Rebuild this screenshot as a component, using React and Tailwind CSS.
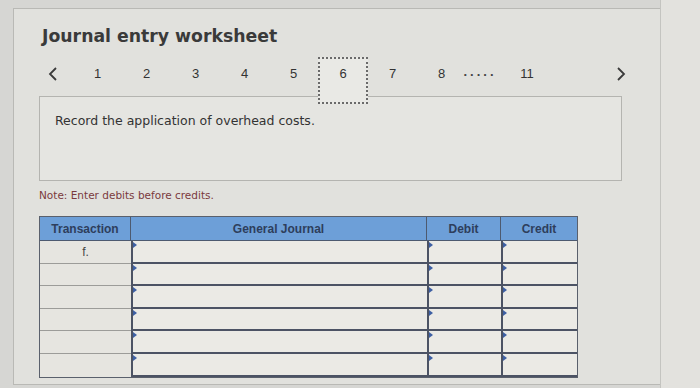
import React from 'react';

const pages = ['1', '2', '3', '4', '5', '6', '7', '8'];
const rows = ['f.', '', '', '', '', ''];

const Chevron = ({ dir }) => (
    <svg width="12" height="16" viewBox="0 0 12 16" fill="none">
        {dir === 'left' ? (
            <polyline points="9,2 3,8 9,14" stroke="#3a3a3a" strokeWidth="1.8" />
        ) : (
            <polyline points="3,2 9,8 3,14" stroke="#3a3a3a" strokeWidth="1.8" />
        )}
    </svg>
);

const InputCell = () => (
    <div className="relative h-full border-l-2 border-b-2 border-[#4c5364] bg-[#ebeae5]">
        <span className="absolute left-0 top-[1px] w-0 h-0 border-y-[3px] border-y-transparent border-l-[4px] border-l-[#3d5fa3]" />
    </div>
);

const App = () => {
    return (
        <div className="w-[700px] h-[388px] overflow-hidden bg-[#d6d6d3] flex" style={{ fontFamily: '"DejaVu Sans", Verdana, sans-serif' }}>
            <div className="ml-[13px] mt-[8px] w-[647px] h-[377px] border-l border-t border-b border-[#b9b9b5] bg-[#e1e1dd] pl-[25px] pt-[17px]">
                <h1 className="text-[17.3px] leading-[20px] font-bold text-[#3a3a3a] pl-[3px]">Journal entry worksheet</h1>

                {/* pagination */}
                <div className="mt-[11px] h-[47px] flex items-start text-[13px] text-[#333]" style={{ fontFamily: '"Liberation Sans", Arial, sans-serif' }}>
                    <div className="w-[28px] h-[33px] flex items-center justify-center"><Chevron dir="left" /></div>
                    <div className="ml-[6px] flex items-start">
                        {pages.map((p) =>
                            p === '6' ? (
                                <div key={p} className="relative z-10 w-[50px] h-[47px] bg-[#e9e9e5] border-2 border-dotted border-[#6a6a6a]">
                                    <div className="h-[29px] flex items-center justify-center">{p}</div>
                                </div>
                            ) : (
                                <div key={p} className="w-[49px] h-[33px] flex items-center justify-center">{p}</div>
                            )
                        )}
                    </div>
                    <div className="-ml-[6px] w-[40px] h-[33px] flex items-center justify-center font-bold tracking-[3px] text-[#444]">
                        <span className="-mt-[4px]">.....</span>
                    </div>
                    <div className="w-[54px] h-[33px] flex items-center justify-center">11</div>
                    <div className="ml-[56px] w-[22px] h-[33px] flex items-center justify-center"><Chevron dir="right" /></div>
                </div>

                {/* prompt */}
                <div className="-mt-[8px] w-[583px] h-[85px] border border-[#b4b4b0] bg-[#e5e5e1] pl-[15px] pt-[16px]">
                    <p className="text-[12.5px] leading-[16px] text-[#333]">Record the application of overhead costs.</p>
                </div>

                <p className="mt-[7px] text-[10.5px] leading-[14px] text-[#7b3a3e]">Note: Enter debits before credits.</p>

                {/* table */}
                <div className="mt-[14px] w-[539px] border border-[#5a606c] bg-[#e6e5e0]" style={{ fontFamily: '"Liberation Sans", Arial, sans-serif' }}>
                    <div className="grid grid-cols-[91px_296px_74px_76px] h-[24px] bg-[#6d9fd8] text-[12px] font-bold text-[#2e3e5c] border-b border-[#4d5a70]">
                        <div className="flex items-center justify-center border-r border-[#4d5a70]">Transaction</div>
                        <div className="flex items-center justify-center border-r border-[#4d5a70]">General Journal</div>
                        <div className="flex items-center justify-center border-r border-[#4d5a70]">Debit</div>
                        <div className="flex items-center justify-center">Credit</div>
                    </div>
                    {rows.map((t, i) => (
                        <div key={i} className="grid grid-cols-[91px_296px_74px_76px] h-[22.6px]">
                            <div className={`flex items-center justify-center text-[12px] text-[#444] ${i < rows.length - 1 ? 'border-b border-[#9c9c99]' : ''}`}>
                                {t}
                            </div>
                            <InputCell />
                            <InputCell />
                            <InputCell />
                        </div>
                    ))}
                </div>
            </div>
            <div className="flex-1 border-l border-[#c4c4c0] bg-[#e3e2de]" />
        </div>
    );
};

export default App;
